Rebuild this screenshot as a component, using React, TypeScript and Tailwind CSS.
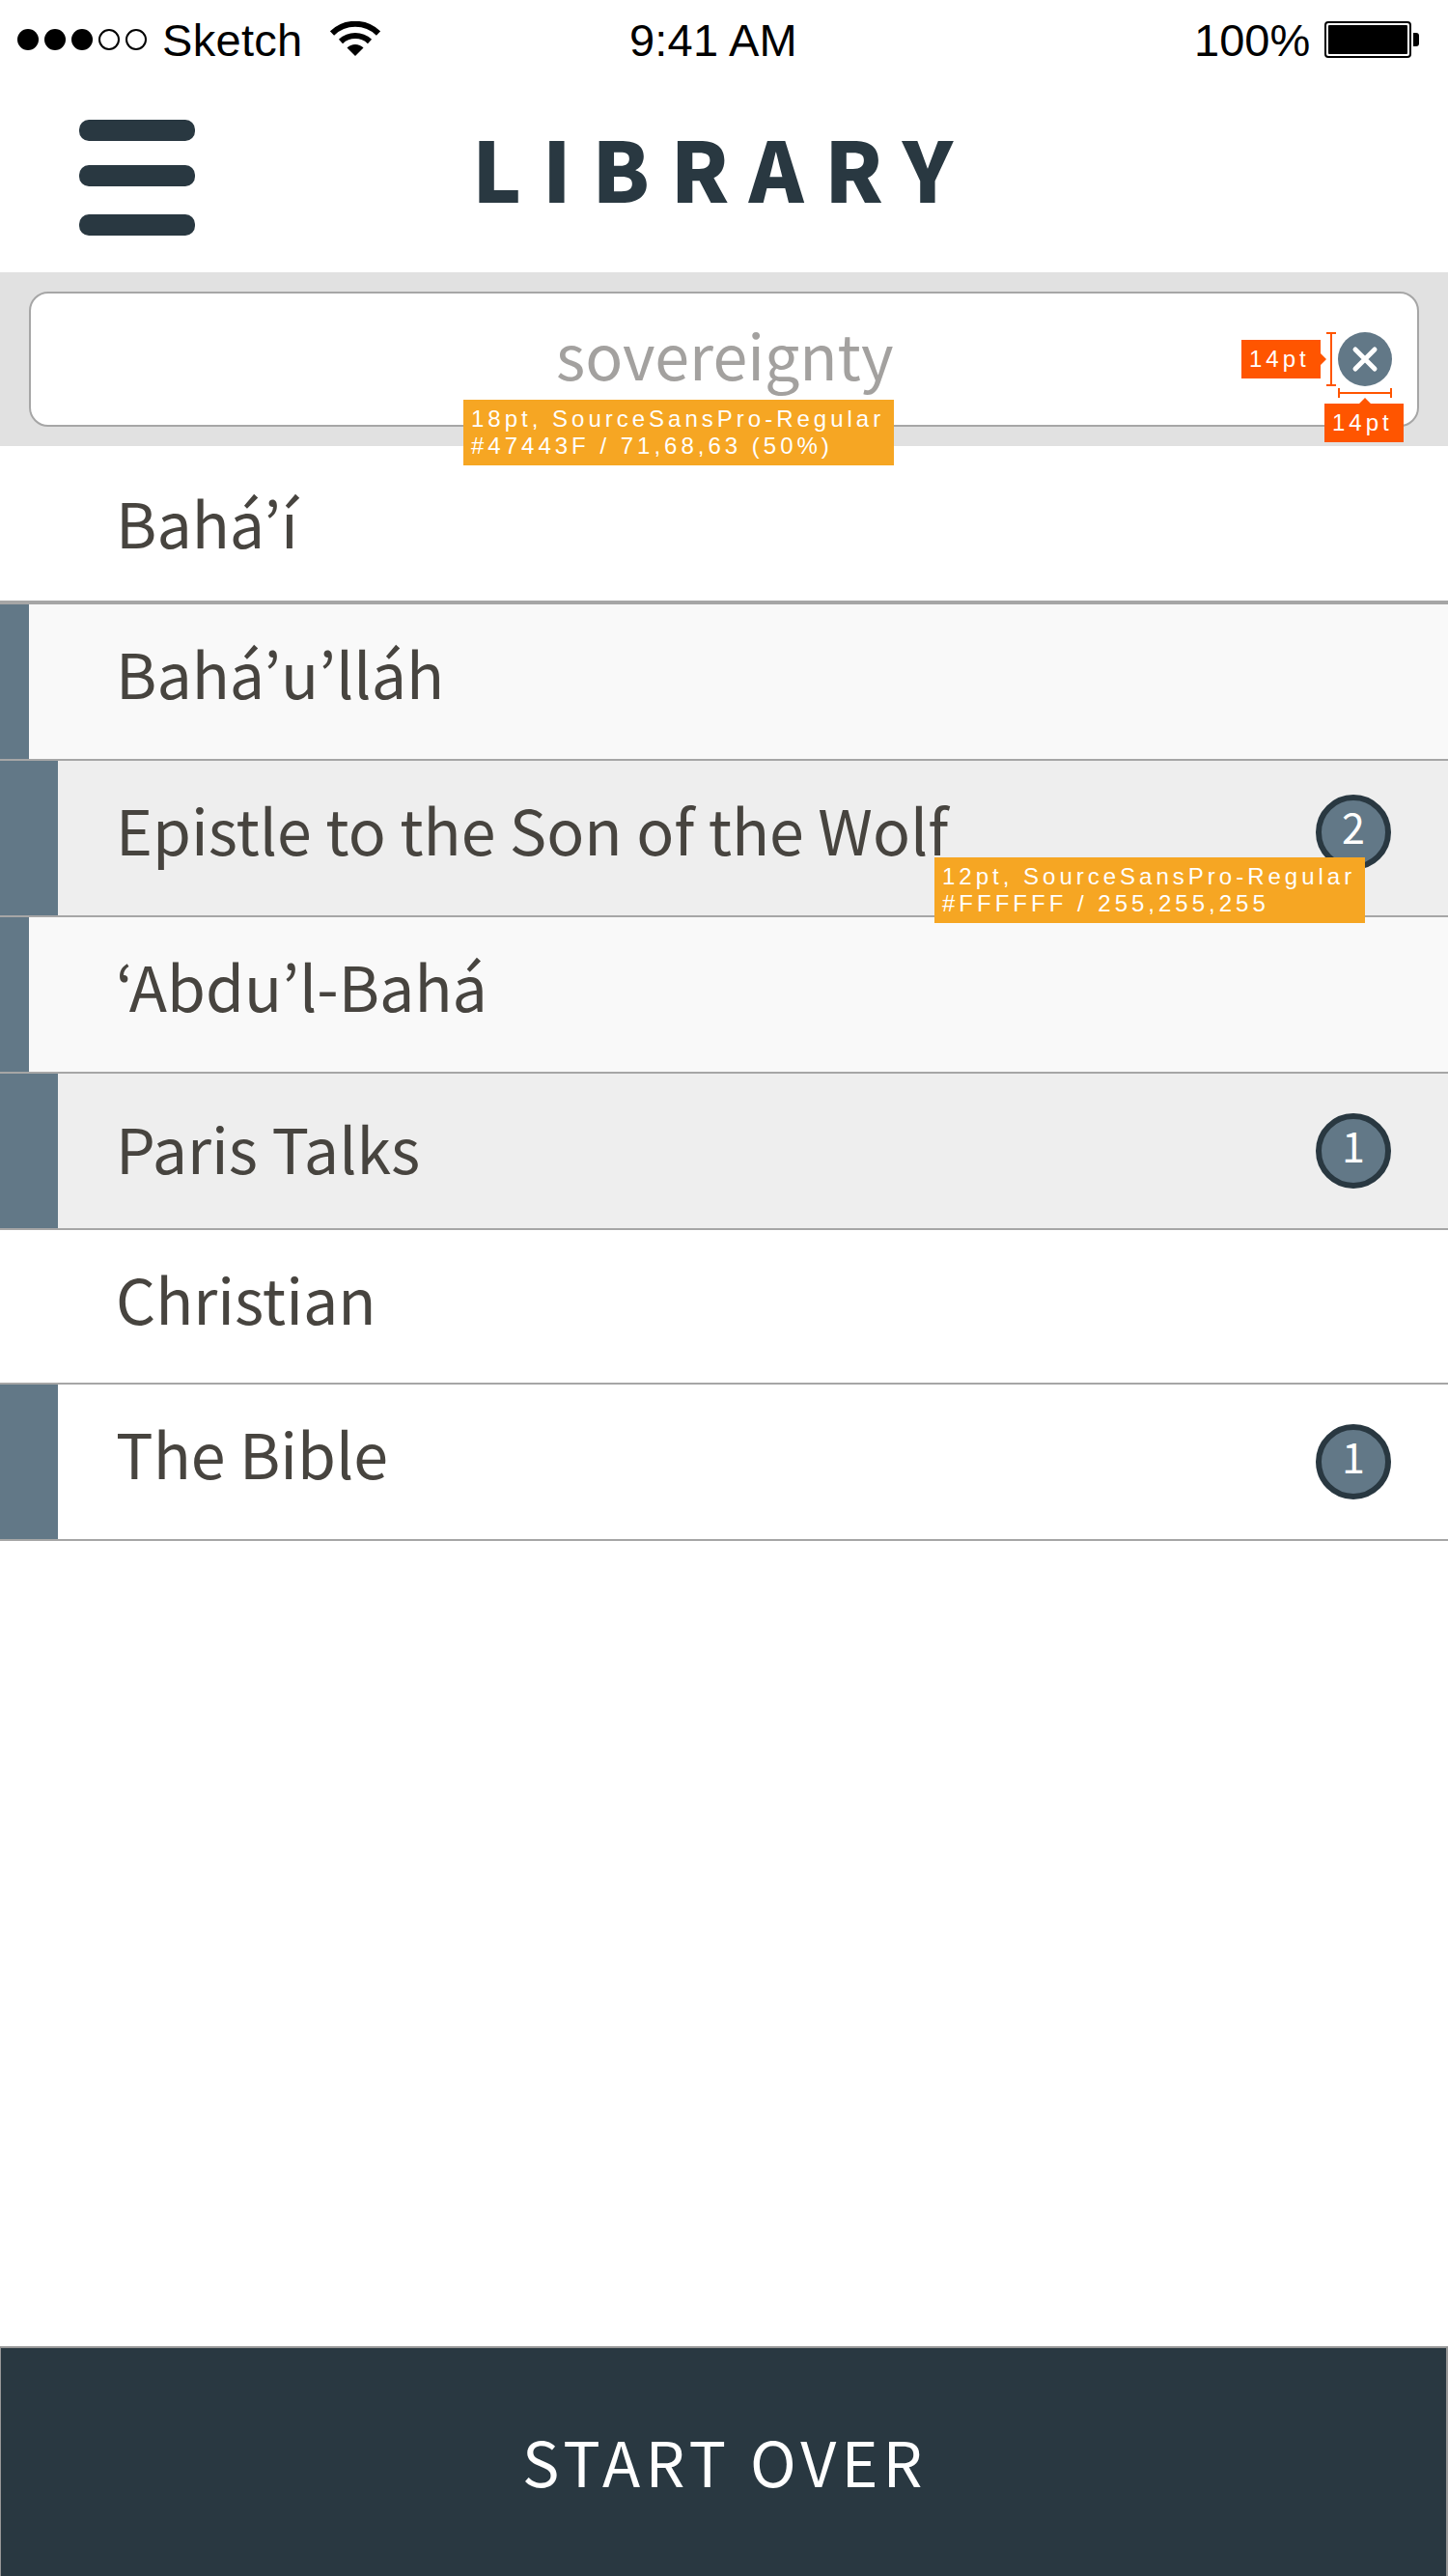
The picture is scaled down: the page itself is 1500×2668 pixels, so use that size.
const SANS = "font-['Noto_Sans_CJK_KR',sans-serif]";
const HELV = "font-['Liberation_Sans',sans-serif]";

type Row = {
  title: string;
  row: string;
  accent: string;
  textPad: string;
  count?: number;
  badgeTop?: string;
};

const rows: Row[] = [
  { title: "Bahá’í", row: "h-[164px] border-b-4 bg-white", accent: "w-0", textPad: "pt-[38px]" },
  { title: "Bahá’u’lláh", row: "h-[162px] border-b-2 bg-[#f9f9f9]", accent: "w-[30px]", textPad: "pt-[30px]" },
  { title: "Epistle to the Son of the Wolf", row: "h-[162px] border-b-2 bg-[#eeeeee]", accent: "w-[60px]", textPad: "pt-[30px]", count: 2, badgeTop: "mt-[35px]" },
  { title: "‘Abdu’l-Bahá", row: "h-[162px] border-b-2 bg-[#f9f9f9]", accent: "w-[30px]", textPad: "pt-[30px]" },
  { title: "Paris Talks", row: "h-[162px] border-b-2 bg-[#eeeeee]", accent: "w-[60px]", textPad: "pt-[36px]", count: 1, badgeTop: "mt-[41px]" },
  { title: "Christian", row: "h-[160px] border-b-2 bg-white", accent: "w-0", textPad: "pt-[30px]" },
  { title: "The Bible", row: "h-[162px] border-b-2 bg-white", accent: "w-[60px]", textPad: "pt-[30px]", count: 1, badgeTop: "mt-[41px]" },
];

function StatusBar() {
  return (
    <div className={`${HELV} flex h-[82px] w-full items-start text-[47px] leading-[54px] text-black`}>
      <div className="ml-[18px] mt-[30px] flex gap-[6px]">
        <span className="size-[22px] rounded-full bg-black" />
        <span className="size-[22px] rounded-full bg-black" />
        <span className="size-[22px] rounded-full bg-black" />
        <span className="size-[22px] rounded-full border-2 border-black" />
        <span className="size-[22px] rounded-full border-2 border-black" />
      </div>
      <span className="ml-[16px] mt-[15px] w-[174px] tracking-[0.3px]">Sketch</span>
      <svg className="mt-[22px] h-[36px] w-[52px]" viewBox="0 0 52 36" fill="none" stroke="#000">
        <path d="M2 12.5 A34.5 34.5 0 0 1 50 12.5" strokeWidth="6" />
        <path d="M11 21 A22 22 0 0 1 41 21" strokeWidth="6" />
        <path d="M17.5 27.5 A12 12 0 0 1 34.5 27.5 L26 36 Z" fill="#000" stroke="none" />
      </svg>
      <span className="ml-[258px] mt-[15px] w-[585px] tracking-[0.2px]">9:41 AM</span>
      <span className="mt-[15px] w-[135px] whitespace-nowrap">100%</span>
      <div className="mt-[22px] flex items-center gap-[2px]">
        <div className="h-[38px] w-[90px] rounded-[4px] border-2 border-black p-[2px]">
          <div className="h-full rounded-[1px] bg-black" />
        </div>
        <div className="h-[14px] w-[6px] rounded-r-[3px] bg-black" />
      </div>
    </div>
  );
}

function Header() {
  return (
    <header className="flex h-[200px] items-start">
      <div className="ml-[82px] mt-[42px] flex w-[120px] flex-col">
        <span className="h-[22px] rounded-[10px] bg-[#293841]" />
        <span className="mt-[25px] h-[22px] rounded-[10px] bg-[#293841]" />
        <span className="mt-[29px] h-[22px] rounded-[10px] bg-[#293841]" />
      </div>
      <h1 className={`${SANS} ml-[287px] mt-[41px] text-[86px] font-black leading-[100px] tracking-[21.4px] text-[#293841]`}>
        LIBRARY
      </h1>
    </header>
  );
}

function FontNote({ first, second, place }: { first: string; second: string; place: string }) {
  return (
    <div className={`${HELV} ${place} absolute z-10 h-[68px] w-[446px] whitespace-nowrap bg-[#f6a623] pl-[8px] pt-[6px] text-[24px] leading-[28px] tracking-[4px] text-white`}>
      <p>{first}</p>
      <p>{second}</p>
    </div>
  );
}

function SearchBar() {
  return (
    <div className="relative h-[180px] bg-[#e1e1e1] px-[30px] py-[20px]">
      <div className="flex h-[140px] items-start rounded-[20px] border-2 border-[#a6a6a6] bg-white">
        <span className={`${SANS} ml-[544px] mt-[22px] w-[810px] text-[64.5px] leading-[80px] text-[#a3a19f]`}>sovereignty</span>
        <svg className="mt-[40px] size-[56px]" viewBox="0 0 56 56">
          <circle cx="28" cy="28" r="28" fill="#627887" />
          <path d="M18 18 L38 38 M38 18 L18 38" stroke="#fff" strokeWidth="5" strokeLinecap="round" />
        </svg>
      </div>
      <FontNote first="18pt, SourceSansPro-Regular" second="#47443F / 71,68,63 (50%)" place="left-[480px] top-[132px]" />
      <div className={`${HELV} absolute left-[1286px] top-[70px] h-[40px] w-[82px] bg-[#ff5500] pl-[8px] text-[24px] leading-[40px] tracking-[4px] text-white`}>14pt</div>
      <svg className="absolute left-[1368px] top-[62px] h-[56px] w-[16px]" viewBox="0 0 16 56" fill="#ff5500">
        <path d="M0 22 L6 28 L0 34 Z M6 0 H16 V2 H12 V54 H16 V56 H6 V54 H10 V2 H6 Z" />
      </svg>
      <svg className="absolute left-[1386px] top-[120px] h-[16px] w-[56px]" viewBox="0 0 56 16" fill="#ff5500">
        <path d="M22 16 L28 10 L34 16 Z M0 0 H2 V4 H54 V0 H56 V10 H54 V6 H2 V10 H0 Z" />
      </svg>
      <div className={`${HELV} absolute left-[1372px] top-[136px] h-[40px] w-[82px] bg-[#ff5500] pl-[8px] text-[24px] leading-[40px] tracking-[4px] text-white`}>14pt</div>
    </div>
  );
}

function ListRow({ item }: { item: Row }) {
  return (
    <li className={`${SANS} ${item.row} flex items-start border-[#a6a6a6]`}>
      <div className="h-full w-[120px] shrink-0">
        <div className={`${item.accent} h-full bg-[#627887]`} />
      </div>
      <span className={`${item.textPad} w-[1243px] shrink-0 text-[64.5px] leading-[80px] text-[#47443f]`}>{item.title}</span>
      {item.count !== undefined && (
        <span className={`${item.badgeTop} size-[78px] shrink-0 rounded-full border-[6px] border-[#293841] bg-[#627887] text-center text-[43px] leading-[52px] text-white`}>
          {item.count}
        </span>
      )}
    </li>
  );
}

export default function App() {
  return (
    <div className="flex h-[2668px] w-[1500px] flex-col overflow-hidden bg-white">
      <StatusBar />
      <Header />
      <SearchBar />
      <div className="relative flex-1">
        <ul>
          {rows.map((item) => (
            <ListRow key={item.title} item={item} />
          ))}
        </ul>
        <FontNote first="12pt, SourceSansPro-Regular" second="#FFFFFF / 255,255,255" place="left-[968px] top-[426px]" />
      </div>
      <button className={`${SANS} flex h-[238px] items-start border-x border-r-2 border-t-2 border-[#979797] bg-[#293841] pl-[540px] pt-[76px] text-[64.4px] leading-[80px] tracking-[5.2px] text-white`}>
        START OVER
      </button>
    </div>
  );
}
